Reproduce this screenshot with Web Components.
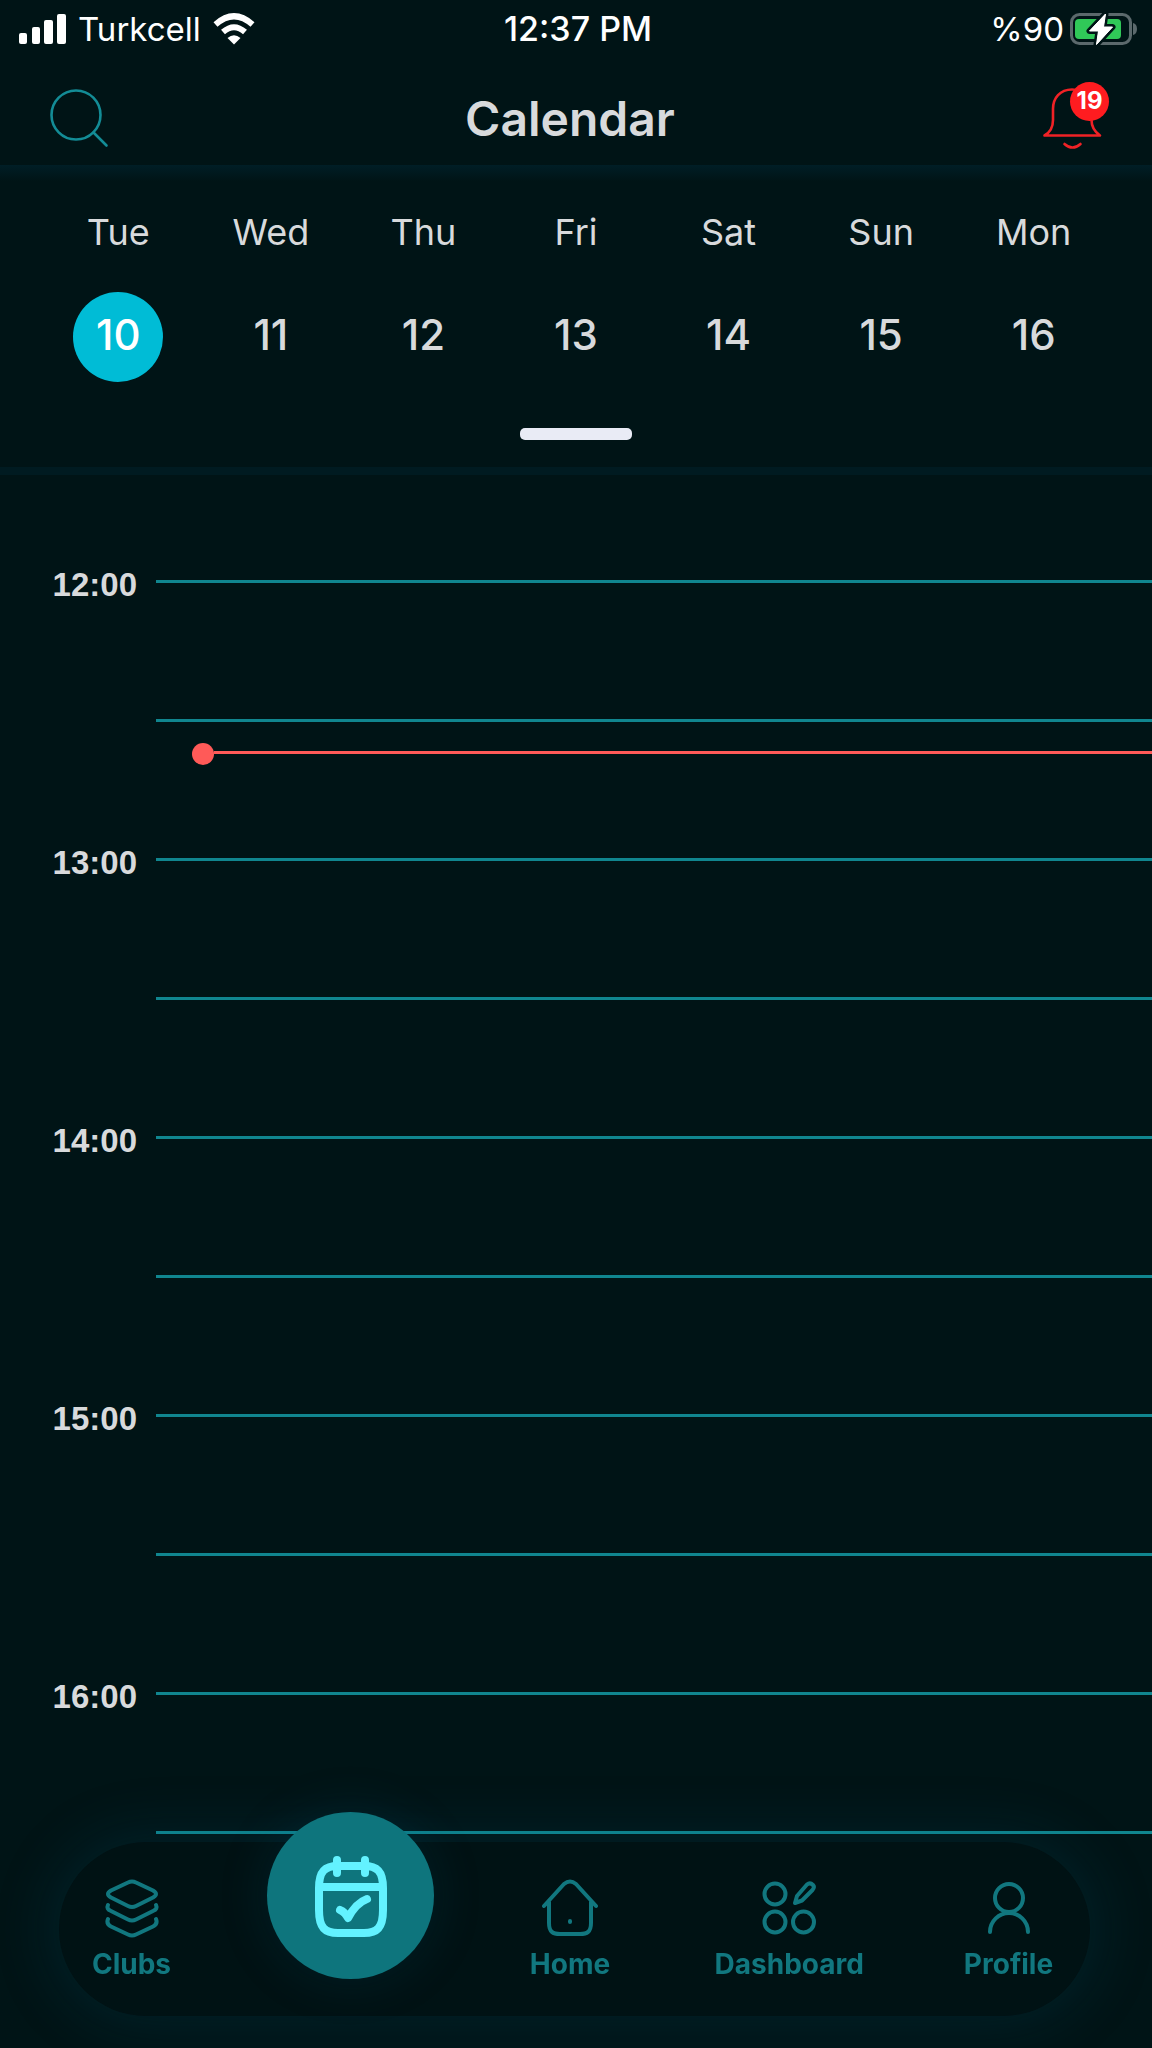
<!DOCTYPE html>
<html lang="en">
<head>
<meta charset="utf-8">
<meta name="viewport" content="width=device-width">
<title>Calendar</title>
<style>
  :root {
    --bg: #001416;
    --bar: #001214;
    --glow: rgba(0, 90, 120, .19);
    --teal: #11777f;
    --line: #10868f;
    --ink: #d8dadc;
    --now: #ff5a58;
    --alert: #ff1c20;
  }
  body { margin: 0; background: var(--bg); color: var(--ink); font-family: Inter, "Liberation Sans", sans-serif; }
</style>
</head>
<body>
<calendar-app></calendar-app>
<script>
const define = (name, html, setup) => customElements.define(name, class extends HTMLElement {
  connectedCallback() {
    if (this.shadowRoot) return;
    const t = document.createElement('template');
    t.innerHTML = html;
    this.attachShadow({ mode: 'open' }).append(t.content.cloneNode(true));
    if (setup) setup(this, this.shadowRoot);
  }
});

define('status-bar', `
<style>
  :host { display: grid; grid-template-columns: 1fr auto 1fr; align-items: center; height: 58px; padding: 0 14px 0 18px; color: #fff; font-size: 33px; line-height: 40px; }
  div { display: flex; align-items: center; gap: 12px; }
  .right { justify-content: flex-end; gap: 6px; }
  .time { font-size: 34px; font-weight: 500; }
  svg { display: block; flex: none; }
</style>
<div>
  <svg width="48" height="30" viewBox="0 0 48 30" fill="#fff"><rect x="1" y="19" width="8" height="11" rx="2"/><rect x="14" y="13" width="8" height="17" rx="2"/><rect x="26" y="6" width="9" height="24" rx="2"/><rect x="39" y="0" width="9" height="30" rx="2"/></svg>
  <span>Turkcell</span>
  <svg width="42" height="32" viewBox="0 0 42 32" fill="none" stroke="#fff" stroke-width="6"><path d="M2.500 11.500Q21-5 39.500 11.500"/><path d="M10 19Q21 9.500 32 19"/><path d="M21 31.500L14.500 25Q21 19.500 27.500 25Z" fill="#fff" stroke="none"/></svg>
</div>
<span class="time">12:37 PM</span>
<div class="right">
  <span>%90</span>
  <svg width="68" height="34" viewBox="0 0 68 34"><rect x="1.500" y="2.500" width="59" height="29" rx="8" fill="none" stroke="#5b696c" stroke-width="3"/><path d="M63 11Q67 12 67 17Q67 22 63 23Z" fill="#5b696c"/><rect x="5" y="7" width="46" height="20" rx="4" fill="#30c858"/><path d="M35.500 2L19.500 19H28.500L26.500 32.500L42.500 15H33.500Z" fill="#fff" stroke="#001416" stroke-width="6" stroke-linejoin="round" paint-order="stroke"/><path d="M35.500 2L19.500 19H28.500L26.500 32.500L42.500 15H33.500Z" fill="#fff" stroke="#fff" stroke-linejoin="round"/></svg>
</div>`);

define('app-header', `
<style>
  :host { display: grid; grid-template-columns: 1fr auto 1fr; align-items: center; height: 93px; padding: 14px 42px 0 48px; }
  h1 { margin: 0; font-size: 48px; line-height: 56px; font-weight: 600; padding-right: 18px; }
  button { position: relative; display: block; border: 0; padding: 0; background: none; font: inherit; cursor: pointer; }
  button:last-child { justify-self: end; }
  svg { display: block; }
  .badge { position: absolute; right: 1px; top: 0; width: 39px; height: 39px; border-radius: 50%; background: var(--alert); color: #fff; font-size: 24px; line-height: 38px; font-weight: 700; text-align: center; }
</style>
<button aria-label="Search"><svg width="62" height="68" viewBox="0 0 62 68" fill="none" stroke="#138c96" stroke-width="2.600" stroke-linecap="round"><circle cx="28" cy="30" r="24.500"/><path d="M45.500 47.500L58.500 60.500"/></svg></button>
<h1>Calendar</h1>
<button aria-label="Notifications">
  <svg width="69" height="74" viewBox="0 0 69 74" fill="none" stroke="#f02226" stroke-width="2.600" stroke-linecap="round" stroke-linejoin="round"><path d="M31 7.500C19 7.500 12 16 12 27V38C12 46 8 51 3.500 53.500H59C54 50 50.500 46 50.500 38V27C50.500 16 43 7.500 31 7.500Z"/><path d="M23.500 62Q31.500 69 39.500 62"/></svg>
  <span class="badge">19</span>
</button>`);

define('week-day', `
<style>
  :host { display: block; }
  button { width: 100%; display: flex; flex-direction: column; align-items: center; gap: 32px; padding: 0; border: 0; background: none; color: inherit; font: inherit; cursor: pointer; }
  .name { font-size: 36px; line-height: 56px; }
  .num { width: 90px; height: 90px; border-radius: 50%; font-size: 42px; line-height: 86px; font-weight: 500; text-align: center; }
  :host([selected]) .num { background: #00bcd6; color: #fff; }
</style>
<button><span class="name"></span><span class="num"><slot></slot></span></button>`,
(el, root) => { root.querySelector('.name').textContent = el.getAttribute('name'); });

define('week-strip', `
<style>
  :host { display: flex; flex-direction: column; align-items: center; padding-bottom: 27px; }
  .edge { width: 100%; height: 16px; background: linear-gradient(#001e26, #001416); }
  .days { width: 100%; box-sizing: border-box; display: grid; grid-template-columns: repeat(7, 1fr); padding: 23px 42px 46px; }
  .handle { width: 112px; height: 12px; border: 0; padding: 0; border-radius: 5px; background: #e9ebf5; }
</style>
<div class="edge"></div>
<div class="days">
  <week-day name="Tue" selected>10</week-day><week-day name="Wed">11</week-day><week-day name="Thu">12</week-day><week-day name="Fri">13</week-day><week-day name="Sat">14</week-day><week-day name="Sun">15</week-day><week-day name="Mon">16</week-day>
</div>
<button class="handle" aria-label="Expand calendar"></button>`);

define('hour-row', `
<style>
  :host { display: grid; grid-template-columns: 137px 1fr; column-gap: 19px; align-items: center; height: 139px; }
  time { padding-top: 6px; text-align: right; font: bold 33px/40px "Liberation Sans", sans-serif; }
  i { grid-column: 2; height: 3px; background: var(--line); }
</style>`,
(el, root) => {
  const label = el.getAttribute('label');
  if (label) root.append(Object.assign(document.createElement('time'), { textContent: label }));
  root.append(document.createElement('i'));
});

define('day-timeline', `
<style>
  :host { display: block; border-top: 8px solid #001b21; padding-top: 37px; }
  .grid { position: relative; }
  .now { position: absolute; left: 192px; right: 0; top: 231px; display: flex; align-items: center; }
  .dot { width: 22px; height: 22px; border-radius: 50%; background: var(--now); }
  .rule { flex: 1; height: 3px; margin-bottom: 4px; background: var(--now); }
</style>
<div class="grid">
  <hour-row label="12:00"></hour-row><hour-row></hour-row>
  <hour-row label="13:00"></hour-row><hour-row></hour-row>
  <hour-row label="14:00"></hour-row><hour-row></hour-row>
  <hour-row label="15:00"></hour-row><hour-row></hour-row>
  <hour-row label="16:00"></hour-row><hour-row></hour-row>
  <div class="now"><span class="dot"></span><span class="rule"></span></div>
</div>`);

define('tab-item', `
<style>
  :host { display: block; width: 145px; }
  a { display: flex; flex-direction: column; align-items: center; gap: 10px; color: var(--teal); text-decoration: none; font-size: 28px; line-height: 32px; font-weight: 700; }
  ::slotted(svg) { display: block; fill: none; stroke: currentColor; stroke-width: 4; stroke-linecap: round; stroke-linejoin: round; }
  :host([active]) a { width: 167px; height: 167px; margin: 0 -11px; border-radius: 50%; background: #0e757d; color: #63f2ff; justify-content: center; gap: 0; box-shadow: 0 0 50px var(--glow); }
</style>
<a href="#"><slot></slot><span></span></a>`,
(el, root) => {
  const name = el.getAttribute('name'), a = root.querySelector('a');
  if (el.hasAttribute('active')) { a.setAttribute('aria-label', name); root.querySelector('span').remove(); }
  else root.querySelector('span').textContent = name;
});

define('tab-bar', `
<style>
  :host { position: fixed; left: 59px; right: 62px; bottom: 32px; display: block; }
  nav { display: flex; justify-content: space-between; align-items: center; height: 174px; padding-right: 9px; border-radius: 87px; background: var(--bar); box-shadow: 0 0 60px 8px var(--glow); }
  tab-item[active] { margin-bottom: 67px; }
</style>
<nav>
  <tab-item name="Clubs"><svg width="60" height="60" viewBox="0 0 60 60"><path d="M26 4.500Q30 2.500 34 4.500L51 12.500Q57 16 51 19.500L34 28Q30 30 26 28L9 19.500Q3 16 9 12.500Z"/><path d="M6 27Q4 31 9 33L26 41.500Q30 43.500 34 41.500L51 33Q56 31 54 27"/><path d="M6 41Q4 46 9 48.500L26 56.500Q30 58.500 34 56.500L51 48.500Q56 46 54 41"/></svg></tab-item>
  <tab-item name="Calendar" active><svg width="76" height="82" viewBox="0 0 76 82" style="stroke-width:8"><path d="M6 33C6 16 12 11 25 11H51C64 11 70 16 70 33V55C70 73 64 78 51 78H25C12 78 6 73 6 55ZM8 32H68M24 5V18M52 5V18"/><path d="M27 55Q32 57 35 63Q43 48 54 44"/></svg></tab-item>
  <tab-item name="Home"><svg width="60" height="60" viewBox="0 0 60 60"><path d="M4 28L24 6Q30 1 36 6L56 28M9 24V45C9 54 13 56 20 56H40C47 56 51 54 51 45V24M30 43V44"/></svg></tab-item>
  <tab-item name="Dashboard"><svg width="60" height="60" viewBox="0 0 60 60"><circle cx="16" cy="16" r="10.500"/><circle cx="16" cy="44" r="10.500"/><circle cx="44.500" cy="44" r="10.500"/><path d="M36 25L38 18L48 6.500Q51 4 54 7Q56 9 53.500 12L43 22.500Z"/></svg></tab-item>
  <tab-item name="Profile"><svg width="60" height="60" viewBox="0 0 60 60"><circle cx="30" cy="20" r="14"/><path d="M11 54C11 43 20 35 30 35C40 35 49 43 49 54"/></svg></tab-item>
</nav>`);

define('calendar-app', `
<style>
  :host { display: flex; flex-direction: column; height: 100vh; overflow: hidden; }
  day-timeline { flex: 1; min-height: 0; overflow: hidden; }
</style>
<status-bar></status-bar>
<app-header></app-header>
<week-strip></week-strip>
<day-timeline></day-timeline>
<tab-bar></tab-bar>`);
</script>
</body>
</html>
